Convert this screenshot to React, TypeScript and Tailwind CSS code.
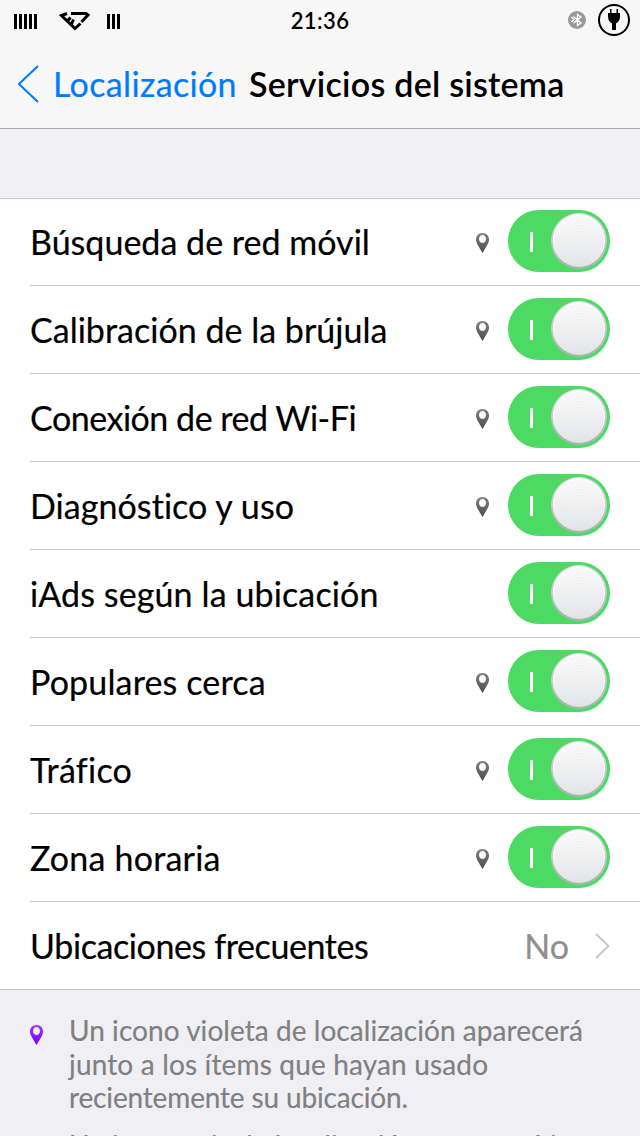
import { clsx } from 'clsx';

type Service = {
    label: string;
    tracking: string;
    located: boolean;
};

const services: Service[] = [
    { label: 'Búsqueda de red móvil', tracking: 'tracking-[0.02px]', located: true },
    { label: 'Calibración de la brújula', tracking: 'tracking-[0.02px]', located: true },
    { label: 'Conexión de red Wi-Fi', tracking: 'tracking-[-0.48px]', located: true },
    { label: 'Diagnóstico y uso', tracking: 'tracking-[0.06px]', located: true },
    { label: 'iAds según la ubicación', tracking: 'tracking-[0.12px]', located: false },
    { label: 'Populares cerca', tracking: 'tracking-[0.15px]', located: true },
    { label: 'Tráfico', tracking: 'tracking-[0.25px]', located: true },
    { label: 'Zona horaria', tracking: 'tracking-[0.2px]', located: true },
];

const rings = [2, 4, 6, 8, 10, 12, 14, 16, 18, 20, 22, 24];

function Pin({ id, from, to, className }: { id: string; from: string; to: string; className?: string }) {
    return (
        <svg viewBox="0 0 13 20" className={clsx('h-5 w-[13px] shrink-0', className)}>
            <defs>
                <linearGradient id={id} x1="0" y1="0" x2="0" y2="1">
                    <stop offset="0" stopColor={from} />
                    <stop offset="1" stopColor={to} />
                </linearGradient>
            </defs>
            <path
                fill={`url(#${id})`}
                fillRule="evenodd"
                d="M6.5 0C2.8 0 0 2.800 0 6.500c0 2 .8 3.600 1.700 5.500L6.500 20l4.800-8C12.200 10.100 13 8.500 13 6.500 13 2.800 10.200 0 6.500 0Zm0 2C8.600 2 10 3.700 10 6s-1.400 4-3.500 4S3 8.300 3 6s1.400-4 3.500-4Z"
            />
        </svg>
    );
}

function Toggle({ id }: { id: string }) {
    return (
        <button className="mb-[2px] flex h-[62px] w-[102px] shrink-0 items-center rounded-full bg-[#4cd964] pl-[22px]" aria-label="Activado">
            <span className="mt-[2px] h-5 w-[3px] bg-white" />
            <svg viewBox="0 0 58 58" className="ml-[17px] h-[58px] w-[58px]">
                <defs>
                    <linearGradient id={`${id}-face`} x1="0" y1="0" x2="0" y2="1">
                        <stop offset="0" stopColor="#ffffff" />
                        <stop offset="0.5" stopColor="#f6f6f6" />
                        <stop offset="1" stopColor="#e6e8ea" />
                    </linearGradient>
                    <linearGradient id={`${id}-edge`} x1="0" y1="0" x2="0" y2="1">
                        <stop offset="0" stopColor="#dfe2e4" />
                        <stop offset="1" stopColor="#aeb2b6" />
                    </linearGradient>
                </defs>
                <circle cx="29" cy="29" r="28" fill={`url(#${id}-edge)`} />
                <circle cx="29" cy="28.500" r="26.200" fill={`url(#${id}-face)`} />
                {rings.map((r) => (
                    <circle key={r} cx="29" cy="29" r={r} fill="none" stroke="#a8acb0" strokeOpacity="0.2" strokeWidth="0.800" />
                ))}
            </svg>
        </button>
    );
}

function StatusBar() {
    return (
        <div className="grid h-10 grid-cols-3 items-center">
            <div className="flex items-center pt-[2px] pl-[14px]">
                <svg viewBox="0 0 108 20" className="h-5 w-[108px]" fill="none" stroke="#000" strokeWidth="3">
                    <path d="M1.500 3v15M6.500 3v15M11.500 3v15M16.500 3v15M21.500 3v15M94.500 3v15M99.500 3v15M104.500 3v15" />
                    <path d="M57 2.500H72L74 4l-6.500 7M66.500 12.500 61 17.500 47.500 4.500 53 2.500M53.500 10l3-3.500M57.500 13l2-4.500" />
                </svg>
            </div>
            <div className="pt-[2px] text-center text-[22px] leading-[38px] font-semibold tracking-[0.4px]">21:36</div>
            <div className="flex items-center justify-end gap-3 pr-[10px]">
                <svg viewBox="0 0 18 18" className="h-[18px] w-[18px]">
                    <circle cx="9" cy="9" r="9" fill="#999" />
                    <path fill="none" stroke="#fff" strokeWidth="1.300" d="M3.500 6 6 8.500 3.500 11M5.500 5.500 13 12 9.500 14.500V3.500L13 6 5.500 12" />
                </svg>
                <svg viewBox="0 0 32 32" className="h-8 w-8">
                    <circle cx="16" cy="16" r="15" fill="none" stroke="#000" strokeWidth="2" />
                    <path d="M12 5h1.500v4h5V5H20v4h2v3c0 4-1.500 6-4 7.500V26h-4v-6.500c-2.500-1.500-4-3.500-4-7.500V9h2Z" />
                </svg>
            </div>
        </div>
    );
}

export default function App() {
    return (
        <div className="flex h-[1136px] w-[640px] flex-col overflow-hidden bg-[#efeff4] font-['Lato',sans-serif] text-black">
            <header className="h-[129px] shrink-0 border-b border-[#a7a7ac] bg-[#f7f7f7]">
                <StatusBar />
                <div className="flex h-[88px] items-center whitespace-nowrap">
                    <svg viewBox="0 0 22 38" className="ml-[18px] h-[38px] w-[22px]" fill="none" stroke="#007aff" strokeWidth="2">
                        <path d="M20 1 1 19l19 18" />
                    </svg>
                    <span className="ml-[13px] w-[196px] text-[34px] leading-[50px] tracking-[0.35px] text-[#007aff] [-webkit-text-stroke:0.2px]">Localización</span>
                    <h1 className="text-[34px] leading-[50px] font-semibold tracking-[0.25px]">Servicios del sistema</h1>
                </div>
            </header>

            <main className="mt-[69px] shrink-0 border-y border-[#c8c7cc] bg-white pl-[30px] text-[34px] whitespace-nowrap [-webkit-text-stroke:0.2px]">
                {services.map((service, index) => (
                    <div key={service.label} className={clsx('flex items-center border-b border-[#c8c7cc] pr-[30px]', index === 0 ? 'h-[87px]' : 'h-[88px]')}>
                        <span className={clsx('flex-1', index === 0 && '-mt-px', service.tracking)}>{service.label}</span>
                        {service.located && <Pin id={`pin-${index}`} from="#818181" to="#4d4d4d" className={clsx('mr-[19px]', index === 0 ? 'mt-px' : 'mt-[2px]')} />}
                        <Toggle id={`toggle-${index}`} />
                    </div>
                ))}
                <div className="flex h-[87px] items-center pr-[30px]">
                    <span className="flex-1 tracking-[-0.4px]">Ubicaciones frecuentes</span>
                    <span className="text-[#8e8e93]">No</span>
                    <svg viewBox="0 0 15 26" className="ml-[26px] h-[26px] w-[15px]" fill="none" stroke="#c7c7cc" strokeWidth="2">
                        <path d="m1 1 12.500 12L1 25" />
                    </svg>
                </div>
            </main>

            <footer className="flex items-start pt-[24px] pl-[30px] text-[28px] leading-[33.5px] text-[#808080] [-webkit-text-stroke:0.15px]">
                <Pin id="pin-violet" from="#a033ff" to="#7a00ff" className="mt-[11px]" />
                <div className="ml-[26px] whitespace-nowrap">
                    <p className="tracking-[0.05px]">Un icono violeta de localización aparecerá</p>
                    <p className="tracking-[0.16px]">junto a los ítems que hayan usado</p>
                    <p className="tracking-[-0.15px]">recientemente su ubicación.</p>
                    <p className="mt-[14.5px]">Un icono gris de localización aparecerá junto</p>
                </div>
            </footer>
        </div>
    );
}
